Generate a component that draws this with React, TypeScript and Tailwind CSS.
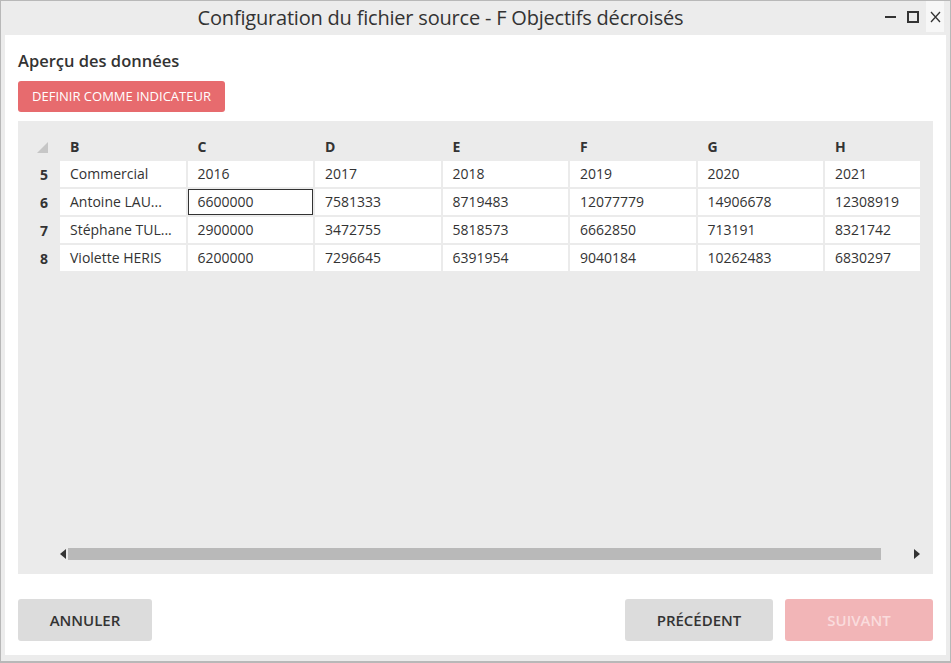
import React from "react";

const cols = ["B", "C", "D", "E", "F", "G", "H"];
const rows: { n: number; cells: string[] }[] = [
  { n: 5, cells: ["Commercial", "2016", "2017", "2018", "2019", "2020", "2021"] },
  { n: 6, cells: ["Antoine LAU...", "6600000", "7581333", "8719483", "12077779", "14906678", "12308919"] },
  { n: 7, cells: ["Stéphane TUL...", "2900000", "3472755", "5818573", "6662850", "713191", "8321742"] },
  { n: 8, cells: ["Violette HERIS", "6200000", "7296645", "6391954", "9040184", "10262483", "6830297"] },
];

export default function App() {
  return (
    <div
      className="w-[951px] h-[663px] bg-[#ececec] border border-b-2 border-[#b8b8b8] flex flex-col text-[#333]"
      style={{ fontFamily: '"Open Sans", "Noto Sans", sans-serif' }}
    >
      {/* title bar */}
      <div className="h-[34px] shrink-0 relative flex items-center justify-center">
        <div className="text-[20px] leading-none text-[#333] pr-[70px] tracking-[-0.2px]">
          Configuration du fichier source - F Objectifs décroisés
        </div>
        <div className="absolute right-[6px] top-0 h-[31px] flex items-center">
          <div className="w-[11px] h-[2px] bg-[#333] mr-[11px]" />
          <div className="w-[12px] h-[12px] border-2 border-[#333] mr-[7px]" />
          <div className="w-[18px] h-[31px] bg-[#f7f7f7] flex items-center justify-center">
            <svg width="11" height="12" viewBox="0 0 11 12">
              <path d="M1 1 L10 11 M10 1 L1 11" stroke="#333" strokeWidth="1.3" fill="none" />
            </svg>
          </div>
        </div>
      </div>

      {/* content */}
      <div className="flex-1 bg-white mx-[4px] mb-[6px] px-[13px] pt-[16px] pb-[14px] flex flex-col">
        <div className="text-[16.5px] leading-[20px] font-semibold text-[#333]">Aperçu des données</div>
        <div className="mt-[10px]">
          <button className="h-[31px] w-[207px] rounded-[3px] bg-[#e76b6e] text-white text-[13px] leading-none">
            DEFINIR COMME INDICATEUR
          </button>
        </div>

        {/* grid area */}
        <div className="mt-[9px] flex-1 bg-[#ebebeb] flex flex-col pl-[19px] pr-[13px] pt-[13px]">
          <div className="overflow-hidden">
            {/* header */}
            <div className="flex h-[27px] items-center">
              <div className="w-[23px] shrink-0 h-full flex items-center">
                <svg width="11" height="11" viewBox="0 0 11 11">
                  <polygon points="11,0 11,11 0,11" fill="#c6c6c6" />
                </svg>
              </div>
              <div className="flex gap-[2px]">
                {cols.map((c) => (
                  <div key={c} className="w-[125.5px] shrink-0 pl-[10px] text-[14px] font-bold text-[#333] mt-[-2px]">
                    {c}
                  </div>
                ))}
              </div>
            </div>
            {/* rows */}
            <div className="flex flex-col gap-[2px]">
              {rows.map((r) => (
                <div key={r.n} className="flex h-[26px] items-center">
                  <div className="w-[23px] shrink-0 pl-[3px] text-[14px] font-bold text-[#333]">{r.n}</div>
                  <div className="flex gap-[2px] h-full">
                    {r.cells.map((v, i) => {
                      const sel = r.n === 6 && i === 1;
                      return (
                        <div
                          key={i}
                          className={
                            sel
                              ? "w-[125.5px] shrink-0 h-full bg-white border border-[#333] pl-[9px] pb-[2px] flex items-center text-[14px] text-[#333] whitespace-nowrap"
                              : "w-[125.5px] shrink-0 h-full bg-white pl-[10px] pb-[2px] flex items-center text-[14px] text-[#333] whitespace-nowrap"
                          }
                        >
                          {v}
                        </div>
                      );
                    })}
                  </div>
                </div>
              ))}
            </div>
          </div>

          <div className="flex-1" />

          {/* scrollbar */}
          <div className="flex items-center h-[12px] mb-[14px] pl-[23px]">
            <svg width="6" height="10" viewBox="0 0 6 10" className="shrink-0">
              <polygon points="6,0 6,10 0,5" fill="#333" />
            </svg>
            <div className="ml-[2px] w-[813px] h-[12px] bg-[#b9b9b9]" />
            <div className="flex-1" />
            <svg width="6" height="10" viewBox="0 0 6 10" className="shrink-0">
              <polygon points="0,0 0,10 6,5" fill="#333" />
            </svg>
          </div>
        </div>

        {/* footer */}
        <div className="mt-[25px] flex items-center">
          <button className="w-[134px] h-[42px] rounded-[3px] bg-[#dcdcdc] text-[15px] font-semibold text-[#333]">
            ANNULER
          </button>
          <div className="flex-1" />
          <button className="w-[148px] h-[42px] rounded-[3px] bg-[#dcdcdc] text-[15px] font-semibold text-[#333]">
            PRÉCÉDENT
          </button>
          <button className="ml-[12px] w-[148px] h-[42px] rounded-[3px] bg-[#f2b5b7] text-[15px] font-semibold text-[#fadcdd]">
            SUIVANT
          </button>
        </div>
      </div>
    </div>
  );
}
